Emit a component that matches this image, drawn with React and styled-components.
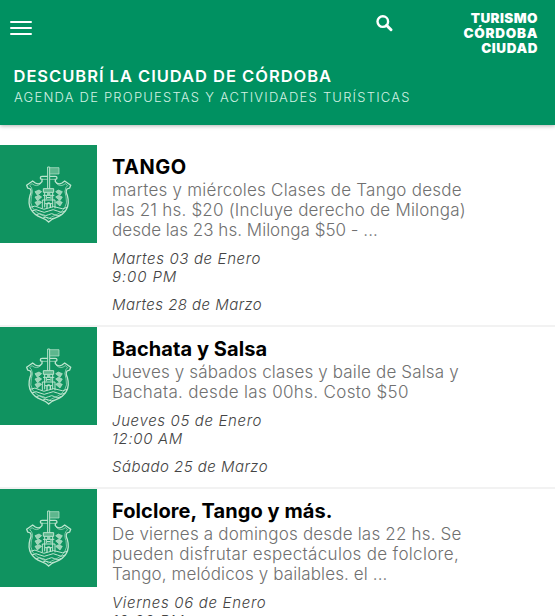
import React from "react";
import styled, { createGlobalStyle } from "styled-components";

const GlobalStyle = createGlobalStyle`
  * { box-sizing: border-box; }
  body {
    margin: 0;
    height: 616px;
    overflow: hidden;
    background: #fff;
    font-family: Inter, "Liberation Sans", sans-serif;
  }
`;

const Header = styled.header`
  height: 125px;
  background: #009161;
  color: #fff;
  box-shadow: 0 1px 4px rgba(0, 0, 0, 0.3);
`;

const TopBar = styled.div`
  display: flex;
  align-items: flex-start;
  height: 66px;
  padding: 11px 17.5px 0 10px;
`;

const MenuButton = styled.button`
  display: flex;
  flex-direction: column;
  gap: 4px;
  width: 22px;
  margin: 10px auto 0 0;
  padding: 0;
  border: 0;
  background: none;
`;

const MenuBar = styled.span`
  height: 2px;
  border-radius: 1px;
  background: #fff;
`;

const SearchButton = styled.button`
  display: flex;
  margin: 4px 0 0;
  padding: 0;
  border: 0;
  background: none;
`;

const Brand = styled.div`
  display: flex;
  flex-direction: column;
  align-items: flex-end;
  width: 144.5px;
  font-size: 13.5px;
  font-weight: 900;
  line-height: 15px;
`;

const BrandWord = styled.span`
  letter-spacing: ${(p) => p.$track}px;
  margin-right: -${(p) => p.$track}px;
`;

const Heading = styled.h1`
  margin: 0 0 1px 13.5px;
  font-size: 16.5px;
  font-weight: 600;
  line-height: 20px;
  letter-spacing: 0.98px;
  white-space: nowrap;
`;

const Subheading = styled.p`
  margin: 0 0 0 14px;
  font-size: 13px;
  font-weight: 300;
  line-height: 20px;
  letter-spacing: 1.22px;
  white-space: nowrap;
  color: #d3f1e4;
`;

const List = styled.main`
  padding-top: 20px;
`;

const Event = styled.article`
  display: flex;
  border-bottom: 2px solid #f2f2f2;
`;

const Thumb = styled.div`
  flex: none;
  width: 97px;
  height: 98px;
  background: #109360;
`;

const Details = styled.div`
  padding: 10px 0 11px 15px;
  white-space: nowrap;
`;

const Title = styled.h2`
  margin: 0 0 1px;
  font-size: 20px;
  font-weight: 700;
  line-height: 24px;
  letter-spacing: ${(p) => p.$track}px;
  color: #000;
`;

const Description = styled.div`
  font-size: 17px;
  font-weight: 300;
  line-height: 20px;
  color: #707070;
`;

const When = styled.div`
  margin-top: 10px;
  font-size: 15px;
  font-style: italic;
  font-weight: 300;
  line-height: 18px;
  color: #444;
`;

const Line = styled.span`
  display: block;
  letter-spacing: ${(p) => p.$track}px;
`;

function Crest() {
  return (
    <svg width="97" height="98" viewBox="0 15 291 294" fill="none" stroke="#bce5ce" strokeWidth="3">
      <path d="M143 146V81h6v65" />
      <path d="M149 83h28v19h-28z" fill="#5db78e" strokeWidth="2" />
      <path
        d="M143 109h-17q-5 0-5 5 0 4 5 4v7q-8 11-20 4l-8-6-18 13 3 8 8 3q5 8-1 19-7 24 3 42 10 17 31 25 14 5 22 13 8-8 22-13 21-8 31-25 10-18 3-42-6-11-1-19l8-3 3-8-18-13-8 6q-12 7-20-4v-7q5 0 5-4 0-5-5-5h-16"
        strokeWidth="4"
      />
      <path
        d="M126 118h17M149 118h16M123 130q-13 13-27 1l-7 6 5 5q7 11 0 28-5 20 4 34 9 14 26 21 14 5 22 12 8-7 22-12 17-7 26-21 9-14 4-34-7-17 0-28l5-5-7-6q-14 12-27-1"
        strokeWidth="2"
      />
      <path d="M130 146h31v11h-31z" fill="#5db78e" />
      <path d="M134 157v45M158 157v45M129 166h34M127 180h38M127 180v25M165 180v25M139 166v12M153 166v12M135 191h22" />
      <path d="M141 204v-12q5-7 10 0v12M141 162h10M141 173h10" strokeWidth="4" />
      <g fill="#9bd5b7" strokeWidth="2">
        <path d="M105 155l12-5 8 5-13 11zM105 171l12-5 8 5-13 11zM105 187l12-5 8 5-13 11z" />
        <path d="M187 155l-12-5-8 5 13 11zM187 171l-12-5-8 5 13 11zM187 187l-12-5-8 5 13 11z" />
      </g>
      <path d="M91 202q14-8 27 1t28 1 28-1 27-1M96 213q12-8 24 0t26 0 26 0 24 0M109 224q10-6 19 0t18 0 18 0 19 0M129 234q8-5 17 0t17 0" />
    </svg>
  );
}

const events = [
  {
    title: ["TANGO", 0.5],
    text: [
      ["martes y miércoles Clases de Tango desde", 0.24],
      ["las 21 hs. $20 (Incluye derecho de Milonga)", 0.205],
      ["desde las 23 hs. Milonga $50 - ...", 0.02],
    ],
    start: [["Martes 03 de Enero", 0.63], ["9:00 PM", 0.9]],
    end: [["Martes 28 de Marzo", 0.45]],
  },
  {
    title: ["Bachata y Salsa", 0.06],
    text: [
      ["Jueves y sábados clases y baile de Salsa y", 0.15],
      ["Bachata. desde las 00hs. Costo $50", 0.33],
    ],
    start: [["Jueves 05 de Enero", 0.64], ["12:00 AM", 0.66]],
    end: [["Sábado 25 de Marzo", 0.47]],
  },
  {
    title: ["Folclore, Tango y más.", 0.08],
    text: [
      ["De viernes a domingos desde las 22 hs. Se", 0.18],
      ["pueden disfrutar espectáculos de folclore,", 0.32],
      ["Tango, melódicos y bailables. el ...", 0.11],
    ],
    start: [["Viernes 06 de Enero", 0.67], ["10:00 PM", 0.95]],
    end: [],
  },
];

const Lines = ({ items }) =>
  items.map(([text, track]) => (
    <Line key={text} $track={track}>
      {text}
    </Line>
  ));

export default function App() {
  return (
    <>
      <GlobalStyle />
      <Header>
        <TopBar>
          <MenuButton aria-label="Menú">
            <MenuBar />
            <MenuBar />
            <MenuBar />
          </MenuButton>
          <SearchButton aria-label="Buscar">
            <svg width="17" height="17" viewBox="0 0 17 17" fill="none" stroke="#fff">
              <circle cx="6.8" cy="6.6" r="5.3" strokeWidth="2.4" />
              <path d="M10.6 10.4l4.4 4.4" strokeWidth="2.9" strokeLinecap="round" />
            </svg>
          </SearchButton>
          <Brand>
            <BrandWord $track={0.4}>TURISMO</BrandWord>
            <BrandWord $track={0.75}>CÓRDOBA</BrandWord>
            <BrandWord $track={0.6}>CIUDAD</BrandWord>
          </Brand>
        </TopBar>
        <Heading>DESCUBRÍ LA CIUDAD DE CÓRDOBA</Heading>
        <Subheading>AGENDA DE PROPUESTAS Y ACTIVIDADES TURÍSTICAS</Subheading>
      </Header>
      <List>
        {events.map((e) => (
          <Event key={e.title[0]}>
            <Thumb>
              <Crest />
            </Thumb>
            <Details>
              <Title $track={e.title[1]}>{e.title[0]}</Title>
              <Description>
                <Lines items={e.text} />
              </Description>
              <When>
                <Lines items={e.start} />
              </When>
              {e.end.length > 0 && (
                <When>
                  <Lines items={e.end} />
                </When>
              )}
            </Details>
          </Event>
        ))}
      </List>
    </>
  );
}
